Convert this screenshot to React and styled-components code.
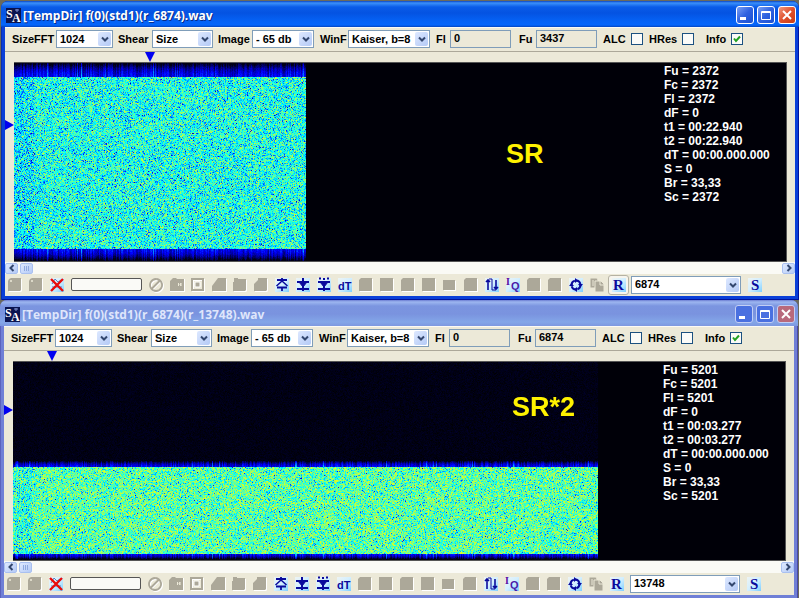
import React, { useEffect, useRef } from 'react'
import styled, { createGlobalStyle, css } from 'styled-components'

const GlobalStyle = createGlobalStyle`
  * {
    box-sizing: border-box;
  }

  body {
    margin: 0;
    background: #6b6a5c;
    font: bold 11px/14px "Liberation Sans", Arial, sans-serif;
    color: #000;
  }

  button, input, select {
    font: inherit;
    color: inherit;
  }
`

const Desktop = styled.main`
  display: flex;
  flex-direction: column;
  padding-top: 1px;
`

const Frame = styled.section`
  display: flex;
  flex-direction: column;
  margin: ${p => p.$active ? '0 0 0 1px' : '0 1px 0 0'};
  padding: 0 4px ${p => p.$active ? 4 : 5}px;
  border-radius: 7px 7px 0 0;
  background: ${p => p.$active ? '#0a3fd8' : '#6f7fd6'};
  box-shadow: inset 1px 0 ${p => p.$active ? '#0a2fb0' : '#5b62bd'},
    inset -1px -1px ${p => p.$active ? '#00139c' : '#4a4aa8'};
  overflow: hidden;
`

const TitleBar = styled.header`
  display: flex;
  align-items: center;
  gap: 2px;
  height: 26px;
  margin: 0 -4px;
  padding: 2px 3px 0 5px;
  background: ${p => p.$active
    ? 'linear-gradient(#0b46c4 0, #3a90fa 2px, #0a5ce8 6px, #0453e2 12px, #0562f5 20px, #0566fb 24px, #0344c0 26px)'
    : 'linear-gradient(#6c7dd2 0, #9db6f0 2px, #7b95e0 6px, #7a93df 14px, #83a6e8 22px, #7d98e0 26px)'};
`

const Title = styled.h1`
  flex: 1;
  margin: 0;
  padding-top: 2px;
  font: 700 12px/18px "Open Sans", sans-serif;
  white-space: nowrap;
  color: ${p => p.$active ? '#fff' : '#dfe6fb'};
  text-shadow: ${p => p.$active ? '1px 1px #0a2c86' : 'none'};
`

const WindowButtons = styled.div`
  display: flex;
  gap: 3px;
`

const WindowButton = styled.button`
  display: grid;
  place-items: center;
  width: 18px;
  height: 18px;
  padding: 0;
  border: 1px solid ${p => p.$active ? '#fff' : '#c3cff5'};
  border-radius: 3px;
  background: ${p => p.$close
    ? (p.$active ? 'linear-gradient(135deg, #f09a80, #e0502c 50%, #c83c14)' : '#b8697c')
    : (p.$active ? 'linear-gradient(135deg, #7ba0f4, #2f62e0 50%, #1c50d0)' : '#4a70e0')};
`

const Client = styled.div`
  background: #ece9d8;
`

const ToolBar = styled.div`
  display: flex;
  align-items: center;
  height: 25px;
  padding: 0 0 1px 7px;
  border-top: 1px solid #fbfaf4;
  border-bottom: 1px solid #aca899;
`

const Field = styled.label`
  display: flex;
  align-items: center;
  justify-content: space-between;
  flex: none;
  width: ${p => p.$width}px;
  margin-right: ${p => p.$gap || 6}px;
  white-space: nowrap;
`

const SelectBox = styled.span`
  display: flex;
  position: relative;
  width: ${p => p.$width}px;
  height: 18px;
`

const Select = styled.select`
  appearance: none;
  width: 100%;
  padding: 0 0 1px 3px;
  border: 1px solid #7f9db9;
  border-radius: 0;
  background: #fff;
`

const SelectArrow = styled.span`
  display: grid;
  place-items: center;
  position: absolute;
  top: 2px;
  right: 2px;
  bottom: 2px;
  width: 13px;
  border-radius: 2px;
  background: linear-gradient(135deg, #dde8ff, #b4caf6);
  pointer-events: none;
`

const TextInput = styled.input`
  width: 61px;
  height: 18px;
  padding: 0 3px 2px;
  border: 1px solid #7f9db9;
  background: #ece9d8;
`

const CheckBox = styled.input`
  appearance: none;
  width: 12px;
  height: 12px;
  margin: 0;
  border: 1px solid #1c5180;
  background: #fbfbf8 center / 10px 10px no-repeat;

  &:checked {
    background-image: url("data:image/svg+xml,%3Csvg xmlns='http://www.w3.org/2000/svg' viewBox='0 0 10 10'%3E%3Cpath d='M2 4.5 4 7 8 2.5' fill='none' stroke='%2321a121' stroke-width='2'/%3E%3C/svg%3E");
  }
`

const TopRuler = styled.div`
  display: flex;
  height: 10px;
  padding-left: ${p => p.$at}px;
`

const PlotRow = styled.div`
  display: flex;
`

const SideRuler = styled.div`
  width: 9px;
  padding-top: ${p => p.$at}px;
`

const Plot = styled.div`
  display: flex;
  flex: 1;
  justify-content: space-between;
  position: relative;
  height: 200px;
  margin-right: 8px;
  border: solid #555;
  border-width: 1px 1px 1px 0;
  background: #000008;
`

const PlotLabel = styled.strong`
  position: absolute;
  top: ${p => p.$top}px;
  left: ${p => p.$left}px;
  font-size: 27px;
  line-height: 30px;
  color: #fff200;
`

const Readings = styled.ul`
  flex: none;
  width: 122px;
  margin: 1px 0 0;
  padding: 0;
  list-style: none;
  font-size: 12px;
  color: #fff;
  white-space: nowrap;
`

const ScrollBar = styled.div`
  display: flex;
  align-items: center;
  gap: 2px;
  height: 12px;
  background: #fafaf5;
`

const ScrollButton = styled.button`
  display: grid;
  place-items: center;
  width: 13px;
  height: 11px;
  padding: 0;
  border: 1px solid #a9c0f0;
  border-radius: 2px;
  background: linear-gradient(135deg, #dde8ff, #b4caf6);

  &:last-child {
    margin-left: auto;
  }
`

const BottomBar = styled.div`
  display: flex;
  align-items: center;
  height: 22px;
  padding-bottom: 1px;
`

const IconButton = styled.button`
  display: grid;
  place-items: center;
  flex: none;
  width: 21px;
  height: 20px;
  padding: 0 2px 0 0;
  border: 0;
  background: none;

  ${p => p.$pressed && css`
    padding: 0;
    border: 1px solid #b5b2a3;
    border-radius: 3px;
    background: #f7f5ee;
  `}
`

const Progress = styled.div`
  width: 71px;
  height: 13px;
  margin: 0 4px 0 3px;
  border: 1px solid #555;
  border-radius: 2px;
  background: #fafaf7;
`

const RateSelect = styled(SelectBox)`
  margin: 0 4px 0 2px;
`

const Chevron = ({ d = 'M1 2.5 4 5.5 7 2.5' }) => (
  <svg width="8" height="8" viewBox="0 0 8 8">
    <path d={d} fill="none" stroke="#33476f" strokeWidth="2" />
  </svg>
)

// grey shapes of the disabled commands
const greyShapes = {
  round: 'M2 2 4 1H14V13L13 14H1V4Z',
  note: 'M1 1H11L14 4V14H1Z',
  slope: 'M1 14V9L7 1H15V14Z',
  square: 'M1 1H14V14H1Z',
  folder: 'M1 14V5H2V1H6V2H14V13L13 14Z',
  step: 'M1 14V7L5 3V1H14V13L13 14Z',
  flat: 'M1 3H13V13H1Z',
  cut: 'M1 14V3L3 1H14V14Z'
}

const GreyIcon = ({ shape }) => (
  <svg width="16" height="16" viewBox="0 0 16 16">
    <path d={greyShapes[shape]} fill="#fff" transform="translate(1 1)" />
    <path d={greyShapes[shape]} fill="#aca899" />
    {shape === 'round' && <path d="M3 4H5M4 3V5" stroke="#ece9d8" />}
  </svg>
)

const BlueIcon = ({ children }) => (
  <svg width="16" height="16" viewBox="0 0 16 16" fill="none" stroke="#0a0a9c" strokeWidth="2">
    <defs>
      <linearGradient id="glow" x2="1" y2="1">
        <stop offset="0" stopColor="#eef4f4" />
        <stop offset="0.5" stopColor="#d3efff" />
        <stop offset="1" stopColor="#7fcfff" />
      </linearGradient>
    </defs>
    <rect x="1" y="1" width="14" height="14" fill="url(#glow)" stroke="none" />
    {children}
  </svg>
)

const Letters = ({ x, size, family = 'Liberation Serif', children }) => (
  <text x={x} y="13" fontSize={size} fontWeight="bold" fontFamily={family} fill="#0a0a9c" stroke="none">{children}</text>
)

const icons = {
  cancel: (
    <BlueIcon>
      <path d="M3 7 6 2 9 5 12 3M3 10H13" stroke="#5a7fc0" strokeWidth="1" />
      <path d="M2 2 14 14M14 2 2 14" stroke="#e80c0c" strokeWidth="2.4" />
    </BlueIcon>
  ),
  stop: (
    <svg width="16" height="16" viewBox="0 0 16 16" fill="none" strokeWidth="1.8">
      <path d="M4.6 12.4 12.4 4.6M9 3a6 6 0 1 0 .1 0" stroke="#fff" />
      <path d="M4 11.5 11.5 4M8 2a6 6 0 1 0 .1 0" stroke="#aca899" />
    </svg>
  ),
  speaker: (
    <svg width="16" height="16" viewBox="0 0 16 16">
      <path d="M1 15V5L4 2H16V15Z" fill="#fff" />
      <path d="M1 14V4L4 1H7L8 2H15V14Z" fill="#aca899" />
      <path d="M9.500 6V9M12 6 11 7.500 12 9Z" stroke="#ece9d8" fill="#ece9d8" />
    </svg>
  ),
  target: (
    <svg width="16" height="16" viewBox="0 0 16 16" fill="none">
      <path d="M3 3H14V14H3Z" stroke="#fff" strokeWidth="2" />
      <path d="M2 2H13V13H2Z" stroke="#aca899" strokeWidth="2" />
      <path d="M5 5H10V10H5Z" fill="#aca899" stroke="#fff" />
    </svg>
  ),
  copy: (
    <svg width="16" height="16" viewBox="0 0 16 16" stroke="#ece9d8">
      <path d="M1 1H8L9 3V11H1Z" fill="#aca899" />
      <path d="M6 4H12L15 7V15H6Z" fill="#aca899" />
      <path d="M11 4V8H15M4 3V9" fill="none" />
    </svg>
  ),
  up: (
    <BlueIcon>
      <path d="M3 3H13M3 10.500H13M8 10V14M8 1V4" strokeWidth="1.8" />
      <path d="M8 4 13.500 9M8 4 2.500 9" strokeWidth="1.5" />
    </BlueIcon>
  ),
  down: (
    <BlueIcon>
      <path d="M8 1V14M2 5H14M2 12H14" />
      <path d="M4 5H12L8 10Z" fill="#0a0a9c" strokeWidth="1" />
    </BlueIcon>
  ),
  split: (
    <BlueIcon>
      <path d="M3 1.500H5M11 1.500H13M8 1V3M8 8V14M2 12H14M2 5H14" />
      <path d="M4 5H12L8 10Z" fill="#0a0a9c" strokeWidth="1" />
    </BlueIcon>
  ),
  dt: <BlueIcon><Letters x="1" size="11" family="Liberation Sans">dT</Letters></BlueIcon>,
  swap: (
    <BlueIcon>
      <path d="M4 13V3M2 5 4 3 6 5M12 3V12M10 10 12 12 14 10" strokeWidth="1.6" />
      <path d="M5 2H8V13H12" strokeWidth="1" />
    </BlueIcon>
  ),
  iq: (
    <BlueIcon>
      <text x="1" y="8" fontSize="10" fontWeight="bold" fontFamily="Liberation Serif" fill="#5a0aa0" stroke="none">I</text>
      <text x="6" y="13" fontSize="11" fontWeight="bold" fontFamily="Liberation Sans" fill="#4a1aa8" stroke="none">Q</text>
    </BlueIcon>
  ),
  cycle: (
    <BlueIcon>
      <circle cx="8" cy="8" r="4.5" strokeDasharray="5.5 1.5" />
      <path d="M7 1 10 3.500 7 6ZM15 7 12.500 10 10 7ZM9 15 6 12.500 9 10ZM1 9 3.500 6 6 9Z" fill="#0a0a9c" stroke="none" />
    </BlueIcon>
  ),
  r: <BlueIcon><Letters x="2" size="15">R</Letters></BlueIcon>,
  s: <BlueIcon><Letters x="4" size="15">S</Letters></BlueIcon>
}

const leadCommands = [['Open', 'round'], ['Save', 'round'], ['Cancel', 'cancel']]

const commands = [
  ['Stop', 'stop'], ['Sound', 'speaker'], ['Frame', 'target'], ['Rise', 'slope'],
  ['Bounds', 'folder'], ['Step', 'step'], ['Upper', 'up'], ['Lower', 'down'],
  ['Both', 'split'], ['Delta time', 'dt'], ['Filter 1', 'cut'], ['Filter 2', 'square'],
  ['Filter 3', 'cut'], ['Filter 4', 'square'], ['Filter 5', 'flat'], ['Filter 6', 'cut'],
  ['Swap', 'swap'], ['IQ', 'iq'], ['Mark', 'cut'], ['Range', 'cut'],
  ['Repeat', 'cycle'], ['Copy', 'copy'], ['Resample', 'r']
]

const renderCommand = ([name, icon], pressed) => (
  <IconButton key={name} type="button" aria-label={name} $pressed={pressed}>
    {icons[icon] || <GreyIcon shape={icon} />}
  </IconButton>
)

function DropDown({ width, value }) {
  return (
    <SelectBox $width={width}>
      <Select defaultValue={value}>
        <option>{value}</option>
      </Select>
      <SelectArrow><Chevron /></SelectArrow>
    </SelectBox>
  )
}

// small seeded generator, the spectrum looks the same on every load
const makeRandom = seed => () => {
  seed = (seed * 1664525 + 1013904223) % 4294967296
  return seed / 4294967296
}

const palette = level => {
  const clamp = v => Math.max(0, Math.min(255, Math.round(v)))
  return [
    clamp((level - 0.5) * 4 * 255),
    clamp(level < 0.25 ? 0 : (level - 0.25) * 4 * 255),
    clamp(level < 0.25 ? level * 4 * 255 : (0.75 - level) * 4 * 255)
  ]
}

function Spectrum({ columns, top, bottom, fadeTop, fadeBottom, level, seed }) {
  const ref = useRef(null)

  useEffect(() => {
    const ctx = ref.current.getContext('2d')
    const random = makeRandom(seed)
    const image = ctx.createImageData(columns, 198)

    for (let x = 0; x < columns; x++) {
      const streak = random()
      const burst = random() > 0.95 ? 0.12 : 0
      for (let y = 0; y < 198; y++) {
        const noise = random() + random() + random() - 1.5
        let value
        if (y >= top && y < bottom) {
          value = level + noise * 0.17 - (random() > 0.95 ? 0.17 : 0) - (x < 20 && random() > 0.5 ? 0.08 : 0)
        } else {
          const away = y < top ? (top - y) / fadeTop : (y - bottom + 1) / fadeBottom
          value = away > 1.15
            ? 0.02 + noise * 0.015
            : Math.max(0.02, 0.24 - away * away * 0.2 + (streak - 0.5) * 0.13 + noise * 0.03 + burst)
        }
        const [r, g, b] = palette(Math.min(value, 0.71))
        const at = (y * columns + x) * 4
        image.data[at] = r
        image.data[at + 1] = g
        image.data[at + 2] = b
        image.data[at + 3] = 255
      }
    }
    ctx.putImageData(image, 0, 0)
  }, [columns, top, bottom, fadeTop, fadeBottom, level, seed])

  return <canvas ref={ref} width={columns} height={198} />
}

function AnalyzerWindow({ active, title, upper, rate, marker, sideMarker, label, labelTop, labelLeft, spectrum, readings }) {
  return (
    <Frame $active={active}>
      <TitleBar $active={active}>
        <svg width="15" height="15" viewBox="0 0 15 15">
          <rect width="15" height="15" fill="#0a1450" />
          <text x="0" y="10" fontSize="12" fontWeight="bold" fontFamily="Liberation Serif" fill="#fff">S</text>
          <text x="6" y="14" fontSize="12" fontWeight="bold" fontFamily="Liberation Serif" fill="#fff">A</text>
          <path d="M9 2H13M11 1V4" stroke="#8090d0" />
        </svg>
        <Title $active={active}>{title}</Title>
        <WindowButtons>
          <WindowButton type="button" aria-label="Minimize" $active={active}>
            <svg width="12" height="12"><path d="M1 9.500H7" stroke="#fff" strokeWidth="3" /></svg>
          </WindowButton>
          <WindowButton type="button" aria-label="Maximize" $active={active}>
            <svg width="12" height="12" fill="none" stroke="#fff"><path d="M1.500 2.500H10.500V10.500H1.500ZM1 3.500H11" /></svg>
          </WindowButton>
          <WindowButton type="button" aria-label="Close" $active={active} $close>
            <svg width="12" height="12"><path d="M2 2 10 10M10 2 2 10" stroke="#fff" strokeWidth="2" /></svg>
          </WindowButton>
        </WindowButtons>
      </TitleBar>

      <Client>
        <ToolBar>
          <Field $width={101} $gap={5}>SizeFFT<DropDown width={57} value="1024" /></Field>
          <Field $width={95} $gap={5}>Shear<DropDown width={61} value="Size" /></Field>
          <Field $width={96}>Image<DropDown width={62} value="- 65 db" /></Field>
          <Field $width={110}>WinF<DropDown width={82} value="Kaiser, b=8" /></Field>
          <Field $width={75} $gap={8}>Fl<TextInput defaultValue="0" /></Field>
          <Field $width={78}>Fu<TextInput defaultValue={upper} /></Field>
          <Field $width={40}>ALC<CheckBox type="checkbox" /></Field>
          <Field $width={45} $gap={12}>HRes<CheckBox type="checkbox" /></Field>
          <Field $width={37}>Info<CheckBox type="checkbox" defaultChecked /></Field>
        </ToolBar>

        <TopRuler $at={marker}>
          <svg width="10" height="10"><path d="M0 0H10L5 10Z" fill="#0000f0" /></svg>
        </TopRuler>
        <PlotRow>
          <SideRuler $at={sideMarker}>
            <svg width="9" height="10"><path d="M0 0V10L9 5Z" fill="#0000f0" /></svg>
          </SideRuler>
          <Plot>
            <Spectrum {...spectrum} />
            <PlotLabel $top={labelTop} $left={labelLeft}>{label}</PlotLabel>
            <Readings>
              {readings.map(text => <li key={text}>{text}</li>)}
            </Readings>
          </Plot>
        </PlotRow>

        <ScrollBar>
          <ScrollButton type="button" aria-label="Scroll left"><Chevron d="M5.500 1 2.500 4 5.500 7" /></ScrollButton>
          <ScrollButton type="button" aria-label="Scroll position">
            <svg width="8" height="7"><path d="M1.500 1V6M3.500 1V6M5.500 1V6" stroke="#8fa9e0" /></svg>
          </ScrollButton>
          <ScrollButton type="button" aria-label="Scroll right"><Chevron d="M2.500 1 5.500 4 2.500 7" /></ScrollButton>
        </ScrollBar>

        <BottomBar>
          {leadCommands.map(item => renderCommand(item))}
          <Progress role="progressbar" aria-label="Progress" />
          {commands.map(item => renderCommand(item, active && item[1] === 'r'))}
          <RateSelect $width={110}>
            <Select defaultValue={rate} aria-label="Sample rate">
              <option>{rate}</option>
            </Select>
            <SelectArrow><Chevron /></SelectArrow>
          </RateSelect>
          {renderCommand(['Set', 's'])}
        </BottomBar>
      </Client>
    </Frame>
  )
}

const readingList = (freq, time) => [
  'Fu = ' + freq,
  'Fc = ' + freq,
  'Fl = ' + freq,
  'dF = 0',
  't1 = ' + time,
  't2 = ' + time,
  'dT = 00:00.000.000',
  'S = 0',
  'Br = 33,33',
  'Sc = ' + freq
]

export default function App() {
  return (
    <Desktop>
      <GlobalStyle />
      <AnalyzerWindow
        active
        title="[TempDir] f(0)(std1)(r_6874).wav"
        upper="3437"
        rate="6874"
        marker={140}
        sideMarker={57}
        label="SR"
        labelTop={76}
        labelLeft={492}
        spectrum={{ columns: 292, top: 14, bottom: 186, fadeTop: 13, fadeBottom: 11, level: 0.53, seed: 7 }}
        readings={readingList('2372', '00:22.940')}
      />
      <AnalyzerWindow
        title="[TempDir] f(0)(std1)(r_6874)(r_13748).wav"
        upper="6874"
        rate="13748"
        marker={43}
        sideMarker={43}
        label="SR*2"
        labelTop={30}
        labelLeft={499}
        spectrum={{ columns: 585, top: 105, bottom: 192, fadeTop: 6, fadeBottom: 5, level: 0.59, seed: 21 }}
        readings={readingList('5201', '00:03.277')}
      />
    </Desktop>
  )
}
